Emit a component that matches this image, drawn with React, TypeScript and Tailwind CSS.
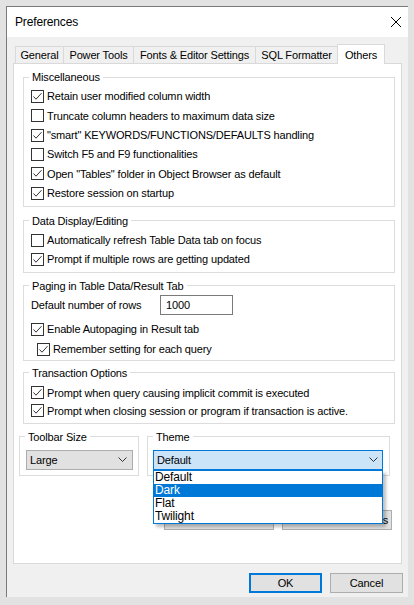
import type { ReactNode } from 'react';

const tabs = [
  { label: 'General', w: 'w-[48px]' },
  { label: 'Power Tools', w: 'w-[70px]' },
  { label: 'Fonts & Editor Settings', w: 'w-[122px]' },
  { label: 'SQL Formatter', w: 'w-[82px]' },
];

function Box({ checked }: { checked?: boolean }) {
  return (
    <span className="w-[13px] h-[13px] border border-[#333] bg-white flex items-center justify-center shrink-0">
      {checked && (
        <svg width="11" height="11" viewBox="0 0 11 11" fill="none">
          <path d="M1.5 5.5 L4 8.2 L9.5 2.2" stroke="#333" strokeWidth="1" />
        </svg>
      )}
    </span>
  );
}

function Check({ label, checked, className = 'h-[19.3px]' }: { label: string; checked?: boolean; className?: string }) {
  return (
    <div className={`flex items-center ${className}`}>
      <Box checked={checked} />
      <span className="ml-[3px] whitespace-nowrap">{label}</span>
    </div>
  );
}

// fieldset keeps no padding so the legend sits at a fixed offset; inner div carries it
function Group({ title, className, inner, children }: { title: string; className: string; inner: string; children: ReactNode }) {
  return (
    <fieldset className={`border border-[#dcdcdc] ${className}`}>
      <legend className="ml-[5px] px-[3px] leading-[14px]">{title}</legend>
      <div className={inner}>{children}</div>
    </fieldset>
  );
}

function Chevron() {
  return (
    <svg width="9" height="5" viewBox="0 0 9 5" fill="none">
      <path d="M0.5 0.5 L4.5 4.5 L8.5 0.5" stroke="#333" strokeWidth="1" />
    </svg>
  );
}

export default function App() {
  return (
    <div className="w-[414px] h-[605px] bg-[#e2e2e2] overflow-hidden text-[11px] tracking-[-0.15px] text-black font-['Liberation_Sans',Arial,sans-serif]">
      <div className="mt-[6px] ml-[6px] w-[402px] h-[591px] border-l border-t border-[#7a7a7a] bg-[#f0f0f0] flex flex-col">
        {/* title bar */}
        <div className="h-[30px] bg-white flex items-center justify-between pl-[8px] pr-[7px]">
          <span className="text-[12px]">Preferences</span>
          <svg width="10" height="10" viewBox="0 0 10 10" fill="none">
            <path d="M0 0 L10 10 M10 0 L0 10" stroke="#000" strokeWidth="1" />
          </svg>
        </div>

        <div className="pt-[7px] pl-[6px] pr-[6px]">
          {/* tabs */}
          <div className="flex h-[20px] ml-[2px] -mb-px">
            {tabs.map((t) => (
              <div
                key={t.label}
                className={`${t.w} h-[17px] mt-[2px] border-l border-t border-[#d9d9d9] bg-[#f0f0f0] flex items-center justify-center whitespace-nowrap`}
              >
                {t.label}
              </div>
            ))}
            <div className="relative z-10 w-[48px] h-[20px] border-l border-t border-r border-[#d9d9d9] bg-white flex items-start justify-center pt-[2px]">
              Others
            </div>
          </div>

          {/* panel */}
          <div className="h-[501px] border border-[#d9d9d9] bg-white pt-[6px] flex flex-col">
            <Group title="Miscellaneous" className="ml-[9px] w-[372px]" inner="pl-[7px] pt-[3px] pb-[3px]">
              <Check checked label="Retain user modified column width" />
              <Check label="Truncate column headers to maximum data size" />
              <Check checked label={'"smart" KEYWORDS/FUNCTIONS/DEFAULTS handling'} />
              <Check label="Switch F5 and F9 functionalities" />
              <Check checked label={'Open "Tables" folder in Object Browser as default'} />
              <Check checked label="Restore session on startup" />
            </Group>

            <Group title="Data Display/Editing" className="mt-[7px] ml-[9px] w-[372px]" inner="pl-[7px] pt-[3px] pb-[3px]">
              <Check label="Automatically refresh Table Data tab on focus" className="h-[19px]" />
              <Check checked label="Prompt if multiple rows are getting updated" className="h-[19px]" />
            </Group>

            <Group title="Paging in Table Data/Result Tab" className="mt-[6px] ml-[9px] w-[372px]" inner="pl-[7px] pt-[1px]">
              <div className="flex items-center h-[22px]">
                <span className="w-[129px] whitespace-nowrap">Default number of rows</span>
                <div className="w-[73px] h-[20px] border border-[#7a7a7a] bg-white flex items-center pl-[5px]">1000</div>
              </div>
              <Check checked label="Enable Autopaging in Result tab" className="h-[19px] mt-[4px]" />
              <Check checked label="Remember setting for each query" className="h-[21px] ml-[6px]" />
            </Group>

            <Group title="Transaction Options" className="mt-[5px] ml-[9px] w-[372px]" inner="pl-[7px] pt-[4px] pb-[3px]">
              <Check checked label="Prompt when query causing implicit commit is executed" className="h-[18px]" />
              <Check checked label="Prompt when closing session or program if transaction is active." className="h-[18px]" />
            </Group>

            <div className="flex mt-[6px]">
              <Group title="Toolbar Size" className="ml-[5px] w-[120px]" inner="pl-[6px] pr-[5px] pt-[6px] pb-[5px]">
                <div className="h-[20px] border border-[#adadad] bg-[#e1e1e1] flex items-center justify-between pl-[3px] pr-[5px]">
                  <span>Large</span>
                  <Chevron />
                </div>
              </Group>
              <Group title="Theme" className="ml-[8px] w-[243px]" inner="pl-[5px] pr-[6px] pt-[6px] pb-[5px]">
                <div className="relative">
                  <div className="h-[20px] border border-[#0078d7] bg-[#cce4f7] flex items-center justify-between pl-[3px] pr-[4px]">
                    <span>Default</span>
                    <Chevron />
                  </div>
                  <div className="absolute top-full left-0 w-full z-20 border border-[#0078d7] bg-white shadow-[3px_3px_3px_rgba(0,0,0,0.25)] text-[12px] leading-[13px]">
                    <div className="h-[13px] pl-px">Default</div>
                    <div className="h-[13px] pl-px bg-[#0078d7] text-white">Dark</div>
                    <div className="h-[13px] pl-px">Flat</div>
                    <div className="h-[13px] pl-px">Twilight</div>
                  </div>
                </div>
              </Group>
            </div>

            <div className="flex justify-end gap-[8px] mt-[34px] mr-[9px]">
              <div className="w-[110px] h-[20px] border border-[#adadad] bg-[#e1e1e1] flex items-end justify-center whitespace-nowrap pr-[3px]">
                Restore All Defaults
              </div>
              <div className="w-[110px] h-[20px] border border-[#adadad] bg-[#e1e1e1] flex items-end justify-end whitespace-nowrap pr-[3px]">
                Restore Tab Defaults
              </div>
            </div>
          </div>
        </div>

        {/* dialog buttons */}
        <div className="flex justify-end gap-[8px] mt-[9px] mr-[5px]">
          <div className="w-[73px] h-[20px] border-2 border-[#0078d7] bg-[#e1e1e1] flex items-center justify-center">OK</div>
          <div className="w-[73px] h-[20px] border border-[#adadad] bg-[#e1e1e1] flex items-center justify-center">Cancel</div>
        </div>
      </div>
    </div>
  );
}
